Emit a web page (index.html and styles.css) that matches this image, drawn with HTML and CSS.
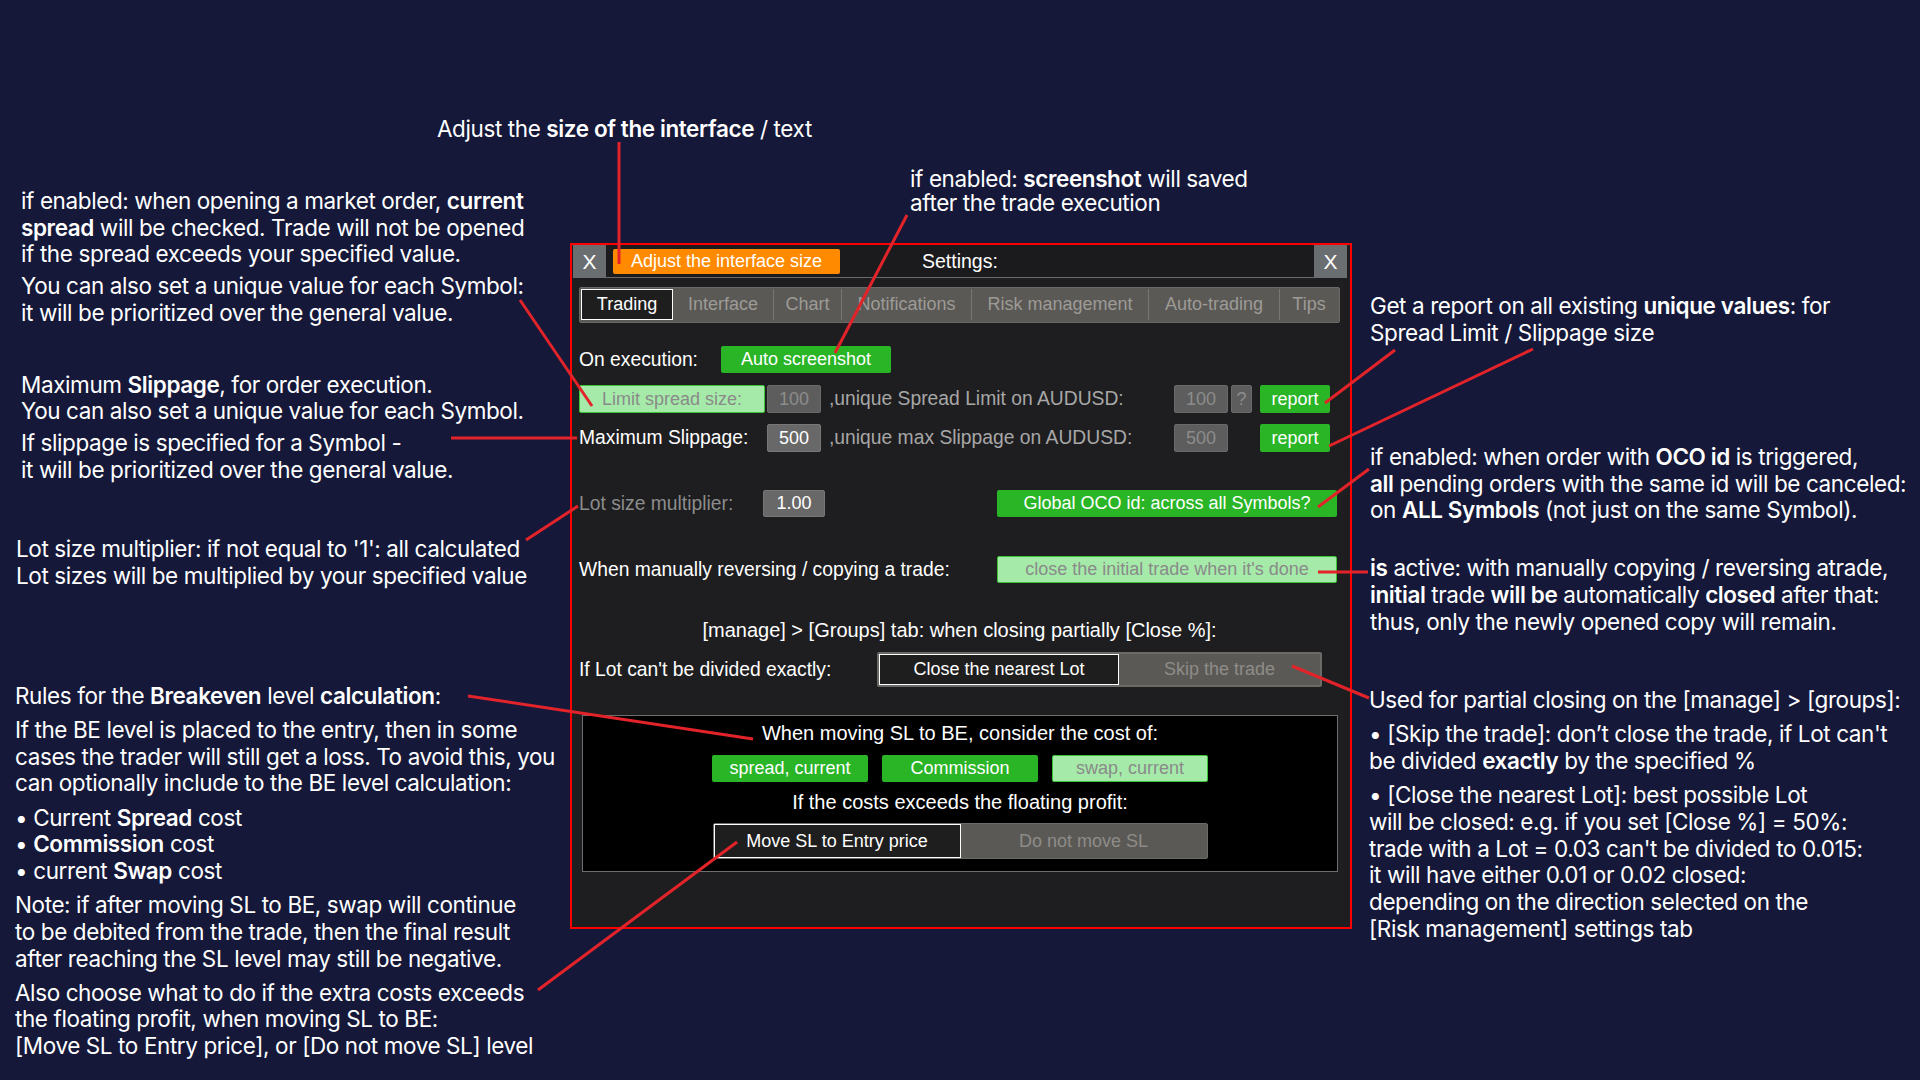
FILE: index.html
```html
<!DOCTYPE html>
<html lang="en">
<head>
<meta charset="utf-8">
<title>Settings — Trading</title>
<link rel="stylesheet" href="styles.css">
</head>
<body>
<div class="page">

  <aside class="notes notes-left">
    <div class="note note-spread">
      <p>if enabled: when opening a market order, <b>current</b><br><b>spread</b> will be checked. Trade will not be opened<br>if the spread exceeds your specified value.</p>
      <p>You can also set a unique value for each Symbol:<br>it will be prioritized over the general value.</p>
    </div>
    <div class="note note-slippage">
      <p>Maximum <b>Slippage</b>, for order execution.<br>You can also set a unique value for each Symbol.</p>
      <p>If slippage is specified for a Symbol -<br>it will be prioritized over the general value.</p>
    </div>
    <div class="note note-lot">
      <p>Lot size multiplier: if not equal to '1': all calculated<br>Lot sizes will be multiplied by your specified value</p>
    </div>
    <div class="note note-be">
      <p>Rules for the <b>Breakeven</b> level <b>calculation</b>:</p>
      <p>If the BE level is placed to the entry, then in some<br>cases the trader will still get a loss. To avoid this, you<br>can optionally include to the BE level calculation:</p>
      <p>• Current <b>Spread</b> cost<br>• <b>Commission</b> cost<br>• current <b>Swap</b> cost</p>
      <p>Note: if after moving SL to BE, swap will continue<br>to be debited from the trade, then the final result<br>after reaching the SL level may still be negative.</p>
      <p>Also choose what to do if the extra costs exceeds<br>the floating profit, when moving SL to BE:<br>[Move SL to Entry price], or [Do not move SL] level</p>
    </div>
  </aside>

  <main class="center">
    <div class="notes-top">
      <p class="note note-size">Adjust the <b>size of the interface</b> / text</p>
      <p class="note note-shot">if enabled: <b>screenshot</b> will saved<br>after the trade execution</p>
    </div>

    <section class="panel">
      <header class="titlebar">
        <span class="close">X</span>
        <span class="resize">Adjust the interface size</span>
        <span class="title">Settings:</span>
        <span class="close close-right">X</span>
      </header>

      <div class="panel-body">
        <nav class="tabs">
          <span class="tab tab-active w-trading">Trading</span>
          <span class="tab w-interface">Interface</span>
          <span class="tab w-chart">Chart</span>
          <span class="tab w-notif">Notifications</span>
          <span class="tab w-risk">Risk management</span>
          <span class="tab w-auto">Auto-trading</span>
          <span class="tab w-tips">Tips</span>
        </nav>

        <div class="row row-exec">
          <span class="label label-exec">On execution:</span>
          <span class="btn btn-green btn-shot">Auto screenshot</span>
        </div>

        <div class="row row-spread">
          <span class="btn btn-pale btn-limit">Limit spread size:</span>
          <span class="field field-dim">100</span>
          <span class="label label-dim">,unique Spread Limit on AUDUSD:</span>
          <span class="row-end">
            <span class="field field-dim">100</span>
            <span class="field field-dim field-help">?</span>
            <span class="btn btn-green btn-report">report</span>
          </span>
        </div>

        <div class="row row-slip">
          <span class="label label-slip">Maximum Slippage:</span>
          <span class="field">500</span>
          <span class="label label-dim">,unique max Slippage on AUDUSD:</span>
          <span class="row-end">
            <span class="field field-dim">500</span>
            <span class="btn btn-green btn-report btn-report-wide">report</span>
          </span>
        </div>

        <div class="row row-lot">
          <span class="label label-grey label-lot">Lot size multiplier:</span>
          <span class="field field-lot">1.00</span>
          <span class="btn btn-green btn-wide">Global OCO id: across all Symbols?</span>
        </div>

        <div class="row row-rev">
          <span class="label">When manually reversing / copying a trade:</span>
          <span class="btn btn-pale btn-wide">close the initial trade when it's done</span>
        </div>

        <p class="center-note manage-note">[manage] &gt; [Groups] tab: when closing partially [Close %]:</p>

        <div class="row row-split">
          <span class="label label-split">If Lot can't be divided exactly:</span>
          <span class="toggle toggle-split">
            <span class="opt opt-on">Close the nearest Lot</span>
            <span class="opt">Skip the trade</span>
          </span>
        </div>

        <div class="be-box">
          <p class="center-note">When moving SL to BE, consider the cost of:</p>
          <div class="be-costs">
            <span class="btn btn-green btn-cost">spread, current</span>
            <span class="btn btn-green btn-cost">Commission</span>
            <span class="btn btn-pale btn-cost">swap, current</span>
          </div>
          <p class="center-note be-note">If the costs exceeds the floating profit:</p>
          <span class="toggle toggle-be">
            <span class="opt opt-on">Move SL to Entry price</span>
            <span class="opt">Do not move SL</span>
          </span>
        </div>
      </div>
    </section>
  </main>

  <aside class="notes notes-right">
    <div class="note note-report">
      <p>Get a report on all existing <b>unique values</b>: for<br>Spread Limit / Slippage size</p>
    </div>
    <div class="note note-oco">
      <p>if enabled: when order with <b>OCO id</b> is triggered,<br><b>all</b> pending orders with the same id will be canceled:<br>on <b>ALL Symbols</b> (not just on the same Symbol).</p>
    </div>
    <div class="note note-copy">
      <p><b>is</b> active: with manually copying / reversing atrade,<br><b>initial</b> trade <b>will be</b> automatically <b>closed</b> after that:<br>thus, only the newly opened copy will remain.</p>
    </div>
    <div class="note note-partial">
      <p>Used for partial closing on the [manage] &gt; [groups]:</p>
      <p>• [Skip the trade]: don’t close the trade, if Lot can't<br>be divided <b>exactly</b> by the specified %</p>
      <p>• [Close the nearest Lot]: best possible Lot<br>will be closed: e.g. if you set [Close %] = 50%:<br>trade with a Lot = 0.03 can't be divided to 0.015:<br>it will have either 0.01 or 0.02 closed:<br>depending on the direction selected on the<br>[Risk management] settings tab</p>
    </div>
  </aside>

  <!-- leader lines from each note to its control -->
  <svg class="leaders" width="1920" height="1080" viewBox="0 0 1920 1080" aria-hidden="true">
    <g stroke="#e3232a" stroke-width="3" fill="none">
      <line x1="619" y1="142" x2="619" y2="264"/>
      <line x1="907" y1="215" x2="835" y2="353"/>
      <line x1="520" y1="300" x2="592" y2="406"/>
      <line x1="451" y1="438" x2="577" y2="438"/>
      <line x1="526" y1="540" x2="578" y2="506"/>
      <line x1="468" y1="696" x2="753" y2="739"/>
      <line x1="538" y1="990" x2="737" y2="842"/>
      <line x1="1395" y1="350" x2="1325" y2="403"/>
      <line x1="1533" y1="349" x2="1329" y2="446"/>
      <line x1="1369" y1="469" x2="1318" y2="507"/>
      <line x1="1318" y1="572" x2="1368" y2="572"/>
      <line x1="1369" y1="698" x2="1292" y2="666"/>
    </g>
  </svg>
</div>
</body>
</html>
```

FILE: styles.css
```css
html, body {
  margin: 0;
  padding: 0;
  background: #151839;
}

.page {
  position: relative;
  width: 1920px;
  height: 1080px;
  overflow: hidden;
  display: grid;
  grid-template-columns: 570px 782px 568px;
  background: #151839;
}

/* ---------- annotation text ---------- */

.note {
  font-family: Inter, "Noto Sans", sans-serif;
  font-size: 22.5px;
  line-height: 26.7px;
  letter-spacing: -0.4px;
  color: #ffffff;
  white-space: nowrap;
}

.note p {
  margin: 0;
}

.note b {
  font-weight: 600;
}

.notes-left .note-spread { margin: 188px 0 0 21px; }
.notes-left .note-spread p + p { margin-top: 5px; }

.notes-left .note-slippage { margin: 45px 0 0 21px; }
.notes-left .note-slippage p + p { margin-top: 5px; }

.notes-left .note-lot { margin: 53px 0 0 16px; }

.notes-left .note-be { margin: 93px 0 0 15px; }
.notes-left .note-be p + p { margin-top: 7.5px; }

.notes-right .note-report { margin: 293px 0 0 18px; }
.notes-right .note-oco { margin: 97.6px 0 0 18px; }
.notes-right .note-copy { margin: 31px 0 0 18px; }
.notes-right .note-partial { margin: 52px 0 0 17px; }
.notes-right .note-partial p + p { margin-top: 7.5px; }

.notes-top {
  display: flow-root;
  height: 243px;
}

.note-size {
  margin: 116px 0 0 -133px;
}

.note-shot {
  margin: 24px 0 0 340px;
  line-height: 24.3px;
}

/* ---------- settings panel ---------- */

.panel {
  width: 782px;
  height: 686px;
  box-sizing: border-box;
  border: 2px solid #ff0000;
  background: #1e1e20;
  font-family: "Liberation Sans", Arial, sans-serif;
  color: #ffffff;
}

.titlebar {
  display: flex;
  align-items: center;
  height: 32px;
  margin: 0 3px 0 1px;
  background: #1b1b1d;
  border-bottom: 1px solid #6b6b6b;
}

.close {
  align-self: flex-start;
  width: 33px;
  height: 33px;
  background: #6b6e70;
  display: flex;
  align-items: center;
  justify-content: center;
  font-size: 21px;
}

.close-right {
  margin-left: auto;
}

.resize {
  margin-left: 7px;
  width: 227px;
  height: 25px;
  border-radius: 2px;
  background: #ff8a00;
  font-size: 18px;
  display: flex;
  align-items: center;
  justify-content: center;
}

.title {
  margin-left: 82px;
  font-size: 19.5px;
}

.panel-body {
  padding: 0 10px 0 7px;
}

/* tabs */

.tabs {
  display: flex;
  margin-top: 9px;
  height: 36px;
  box-sizing: border-box;
  padding: 1px 1px 2px;
  background: #5b5955;
  border: 1px solid #6c6a67;
  border-radius: 2px;
}

.tab {
  box-sizing: border-box;
  display: flex;
  align-items: center;
  justify-content: center;
  font-size: 18px;
  color: #9d9b97;
  border-left: 1px solid #787673;
}

.tab-active {
  background: #1e1e1e;
  border: 1px solid #ffffff;
  color: #ffffff;
}

.tab-active + .tab { border-left: none; }

.w-trading { width: 92px; }
.w-interface { width: 100px; }
.w-chart { width: 68px; }
.w-notif { width: 130px; }
.w-risk { width: 177px; }
.w-auto { width: 131px; }
.w-tips { width: 59px; }

/* rows */

.row {
  display: flex;
  align-items: center;
}

.label {
  font-size: 19.3px;
  white-space: nowrap;
}

.label-dim { color: #a7a7a7; margin-left: 8px; }
.label-grey { color: #8c8c8c; }

.label-exec { width: 142px; }
.label-slip { width: 188px; }
.label-lot { width: 184px; }
.label-split { width: 298px; }

.btn {
  box-sizing: border-box;
  display: flex;
  align-items: center;
  justify-content: center;
  font-size: 18px;
  border-radius: 2px;
  white-space: nowrap;
}

.btn-green {
  background: #2ab527;
  color: #ffffff;
}

.btn-pale {
  background: #a5eaa9;
  border: 1px solid #3cc437;
  color: #8a8a8a;
}

.field {
  box-sizing: border-box;
  display: flex;
  align-items: center;
  justify-content: center;
  width: 54px;
  height: 28px;
  background: #686868;
  border: 1px solid #777777;
  border-radius: 2px;
  font-size: 18px;
  color: #ffffff;
}

.field-dim {
  background: #5d5d5d;
  border-color: #6a6a6a;
  color: #8c8c8c;
}

.field-help {
  width: 21px;
  margin-left: 3px;
}

.row-end {
  display: flex;
  align-items: center;
  margin-left: auto;
  margin-right: 10px;
}

.row-exec { margin-top: 23px; height: 27px; }
.btn-shot { width: 170px; height: 27px; }

.row-spread { margin-top: 12px; height: 28px; }
.btn-limit { width: 186px; height: 28px; margin-right: 2px; }

.btn-report { width: 70px; height: 28px; margin-left: 8px; }
.btn-report-wide { margin-left: 32px; }

.row-slip { margin-top: 11px; height: 28px; }

.row-lot { margin-top: 38px; height: 27px; }
.field-lot { width: 62px; height: 27px; }

.btn-wide {
  width: 340px;
  height: 27px;
  margin-left: auto;
  margin-right: 3px;
}

.row-rev { margin-top: 39px; height: 27px; }

.center-note {
  margin: 0;
  font-size: 20px;
  line-height: 22px;
  text-align: center;
  white-space: nowrap;
}

.manage-note { margin-top: 36px; }

.row-split { margin-top: 11px; height: 35px; }

/* two-state switches */

.toggle {
  box-sizing: border-box;
  display: flex;
  background: #5b5955;
  border: 2px solid #6c6a67;
  border-radius: 2px;
}

.opt {
  flex: 1;
  display: flex;
  align-items: center;
  justify-content: center;
  font-size: 18px;
  color: #8e8c88;
}

.opt-on {
  flex: none;
  box-sizing: border-box;
  background: #1e1e1e;
  border: 1px solid #ffffff;
  color: #ffffff;
}

.toggle-split { width: 445px; height: 35px; }
.toggle-split .opt-on { width: 240px; }

/* breakeven box */

.be-box {
  box-sizing: border-box;
  margin: 28px 0 0 3px;
  width: 756px;
  height: 157px;
  padding-top: 6px;
  background: #000000;
  border: 1px solid #6e6e6e;
  display: flex;
  flex-direction: column;
  align-items: center;
}

.be-costs {
  display: flex;
  gap: 14px;
  margin-top: 11px;
}

.btn-cost { width: 156px; height: 27px; }

.be-note { margin-top: 9px; }

.toggle-be {
  margin-top: 10px;
  width: 495px;
  height: 36px;
  border-width: 1px;
}

.toggle-be .opt-on { width: 247px; }

/* overlay for leader lines */

.leaders {
  position: absolute;
  left: 0;
  top: 0;
  pointer-events: none;
}
```
